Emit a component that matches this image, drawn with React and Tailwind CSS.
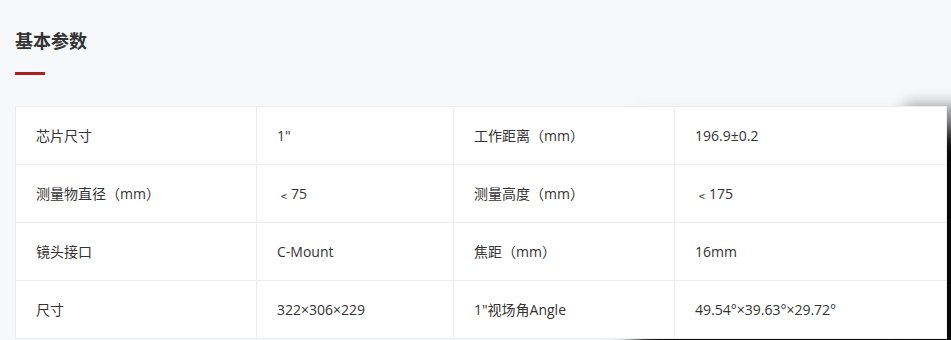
import React from 'react';

const rows = [
  ['芯片尺寸', '1"', '工作距离（mm）', '196.9±0.2'],
  ['测量物直径（mm）', '﹤75', '测量高度（mm）', '﹤175'],
  ['镜头接口', 'C-Mount', '焦距（mm）', '16mm'],
  ['尺寸', '322×306×229', '1"视场角Angle', '49.54°×39.63°×29.72°'],
];

const App = () => {
  return (
    <div
      className="h-[340px] w-full overflow-hidden bg-[#f7f8fa] pl-[15px] pr-[4px] pt-[28px] text-[#333]"
      style={{ fontFamily: '"Open Sans", "Noto Sans CJK SC", sans-serif' }}
    >
      <h3 className="text-[18px] font-bold leading-[26px] text-[#333]">基本参数</h3>
      <div className="mt-[18px] h-[3px] w-[30px] bg-[#a8231f]" />
      <div className="mt-[31px] grid grid-cols-[241px_197px_221px_1fr] border-l border-t border-[#ececec] bg-white shadow-[890px_-2px_14px_rgba(0,0,0,0.35),620px_24px_22px_rgba(0,0,0,0.95)]">
        {rows.map((row, i) =>
          row.map((cell, j) => (
            <div
              key={`${i}-${j}`}
              className="flex h-[58px] items-center border-b border-r border-[#ececec] bg-white pl-[20px] text-[14px] leading-[20px]"
            >
              {cell}
            </div>
          ))
        )}
      </div>
    </div>
  );
};

export default App;
